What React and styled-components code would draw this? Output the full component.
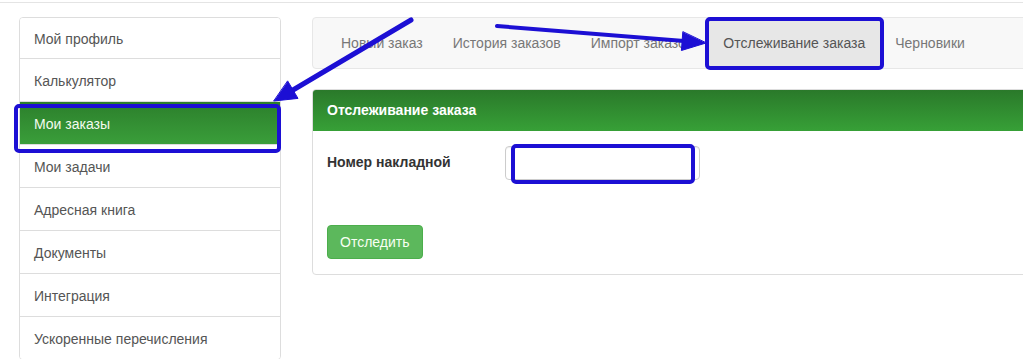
import React from "react";
import styled, { createGlobalStyle } from "styled-components";

const Global = createGlobalStyle`
  html, body { margin: 0; padding: 0; background: #fff; overflow: hidden; }
  body { font-family: "Liberation Sans", Arial, Helvetica, sans-serif; font-size: 14px; line-height: 20px; color: #333; }
  * { box-sizing: border-box; }
`;

const Page = styled.div`
  position: relative;
  width: 1023px;
  height: 359px;
  overflow: hidden;
`;

const TopRule = styled.div`
  height: 3px;
  border-bottom: 1px solid #e4e4e4;
`;

const Layout = styled.div`
  display: flex;
  align-items: flex-start;
  gap: 31px;
  padding: 14px 0 0 19px;
`;

const SideList = styled.div`
  width: 262px;
  flex: none;
  border: 1px solid #dddddd;
  border-radius: 4px;
  overflow: hidden;
`;

const SideItem = styled.div`
  padding: 12px 14px 10px;
  height: 43px;
  line-height: 20px;
  color: ${(p) => (p.$active ? "#f4fbef" : "#555555")};
  background: ${(p) =>
    p.$active ? "linear-gradient(to bottom, #2c7f2c 0%, #3a9e3a 100%)" : "#ffffff"};
  &:first-child { height: 40px; padding-top: 11px; padding-bottom: 9px; }
  & + & { border-top: 1px solid #dddddd; }
`;

const Main = styled.div`
  width: 760px;
  flex: none;
  display: flex;
  flex-direction: column;
  gap: 20px;
`;

const NavBar = styled.div`
  display: flex;
  height: 52px;
  padding: 0 13px;
  background: #f8f8f8;
  border: 1px solid #e7e7e7;
  border-radius: 4px;
`;

const NavTab = styled.div`
  padding: 15px;
  line-height: 20px;
  color: ${(p) => (p.$active ? "#555555" : "#777777")};
  background: ${(p) => (p.$active ? "#e7e7e7" : "transparent")};
`;

const Panel = styled.div`
  border: 1px solid #dddddd;
  border-radius: 4px;
  overflow: hidden;
`;

const PanelHeading = styled.div`
  padding: 10px 14px;
  height: 41px;
  font-weight: bold;
  color: #ffffff;
  background: linear-gradient(to bottom, #2a792a 0%, #37a037 100%);
`;

const PanelBody = styled.div`
  padding: 15px 14px;
  display: flex;
  flex-direction: column;
  gap: 45px;
`;

const FieldRow = styled.div`
  display: grid;
  grid-template-columns: 178px 195px;
  align-items: start;
`;

const Label = styled.label`
  font-weight: bold;
  color: #333333;
  padding-top: 6px;
`;

const Input = styled.input`
  height: 34px;
  width: 195px;
  border: 1px solid #cccccc;
  border-radius: 4px;
  padding: 6px 12px;
  font: inherit;
  box-shadow: inset 0 1px 1px rgba(0, 0, 0, 0.075);
  outline: none;
`;

const Button = styled.button`
  align-self: flex-start;
  height: 34px;
  padding: 6px 12px;
  font: inherit;
  color: #f7fff3;
  background: #5cb85c;
  border: 1px solid #4cae4c;
  border-radius: 4px;
`;

const Annotations = styled.svg`
  position: absolute;
  left: 0;
  top: 0;
  pointer-events: none;
`;

const sideItems = [
  "Мой профиль",
  "Калькулятор",
  "Мои заказы",
  "Мои задачи",
  "Адресная книга",
  "Документы",
  "Интеграция",
  "Ускоренные перечисления",
];

const tabs = [
  "Новый заказ",
  "История заказов",
  "Импорт заказов",
  "Отслеживание заказа",
  "Черновики",
];

const BLUE = "#1c0fd4";

export default function App() {
  return (
    <Page>
      <Global />
      <TopRule />
      <Layout>
        <SideList>
          {sideItems.map((t) => (
            <SideItem key={t} $active={t === "Мои заказы"}>
              {t}
            </SideItem>
          ))}
        </SideList>
        <Main>
          <NavBar>
            {tabs.map((t) => (
              <NavTab key={t} $active={t === "Отслеживание заказа"}>
                {t}
              </NavTab>
            ))}
          </NavBar>
          <Panel>
            <PanelHeading>Отслеживание заказа</PanelHeading>
            <PanelBody>
              <FieldRow>
                <Label>Номер накладной</Label>
                <Input type="text" />
              </FieldRow>
              <Button>Отследить</Button>
            </PanelBody>
          </Panel>
        </Main>
      </Layout>
      <Annotations width="1023" height="359" viewBox="0 0 1023 359">
        <g fill="none" stroke={BLUE} strokeWidth="4" strokeLinejoin="round">
          <rect x="16" y="106" width="263" height="45" rx="3" />
          <rect x="707" y="19" width="175" height="49" rx="3" />
          <rect x="513" y="146" width="180" height="36" rx="3" />
        </g>
        <g stroke={BLUE} fill={BLUE} strokeLinecap="round">
          <line x1="411" y1="20" x2="293" y2="90" strokeWidth="5" />
          <polygon points="274,101 298,98.4 287.8,81.2" strokeWidth="1" />
          <line x1="497" y1="26" x2="684" y2="41" strokeWidth="4" />
          <polygon points="706,43 681.4,50.5 682.8,32" strokeWidth="1" />
        </g>
      </Annotations>
    </Page>
  );
}
